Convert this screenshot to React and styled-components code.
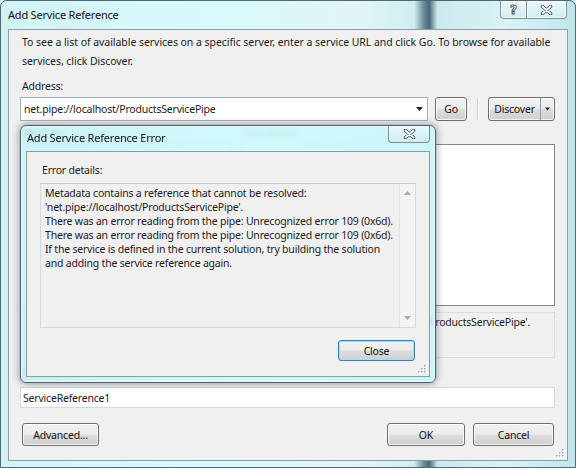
import React from 'react';
import styled, { createGlobalStyle, css } from 'styled-components';

const font = `"Noto Sans", "Open Sans", sans-serif`;

const GlobalStyle = createGlobalStyle`
  html, body {
    margin: 0;
    width: 576px;
    height: 468px;
    overflow: hidden;
    background: #cdeef2;
  }
  body {
    font-family: ${font};
    font-size: 10.5px;
    letter-spacing: -0.2px;
    color: #1b1b1b;
  }
  * { box-sizing: border-box; }
`;

const Window = styled.div`
  width: 576px;
  height: 468px;
  display: flex;
  flex-direction: column;
  padding: 0 7px 6px 7px;
  border: 1px solid #56656e;
  border-radius: 7px 7px 0 0;
  background:
    linear-gradient(90deg, #d2f3f6 0%, #d7fbfd 35%, #e2f5f6 62%, #cfeef1 72%, #6e8d98 73.6%, #47687a 74.6%, #cbe9ed 76%, #d9f3f6 88%, #bfe6ec 100%);
`;

const TitleBar = styled.div`
  height: 28px;
  display: flex;
  align-items: flex-start;
`;

const TitleText = styled.div`
  line-height: 28px;
  font-size: 11px;
  color: #111;
`;

const CaptionGroup = styled.div`
  margin-left: auto;
  margin-right: 1px;
  display: flex;
`;

const CaptionButton = styled.div`
  width: ${p => p.$w}px;
  height: 18px;
  display: flex;
  align-items: center;
  justify-content: center;
  border: 1px solid #7f9099;
  border-top: none;
  background: linear-gradient(#e9f7f8, #d4eef1);
  box-shadow: inset 0 0 0 1px rgba(255, 255, 255, 0.6);
  ${p => p.$first && css`border-radius: 0 0 0 4px; border-right: none;`}
  ${p => p.$last && css`border-radius: 0 0 4px 0;`}
`;

const HelpGlyph = styled.span`
  font-family: "DejaVu Sans", sans-serif;
  font-weight: bold;
  font-size: 12px;
  color: #fff;
  -webkit-text-stroke: 0.9px #4a565c;
  line-height: 1;
`;

const Client = styled.div`
  flex: 1;
  position: relative;
  display: flex;
  flex-direction: column;
  background: #f0f0f0;
  border: 1px solid #8d9ca6;
  padding: 3px 12px 14px 11px;
`;

const Intro = styled.p`
  margin: 0 0 0 2px;
  line-height: 19px;
  letter-spacing: -0.05px;
`;

const Label = styled.div`
  margin: ${p => p.$mt || 0}px 0 0 2px;
  line-height: ${p => p.$lh || 15}px;
`;

const Row = styled.div`
  display: flex;
  height: 24px;
  margin-top: 2px;
`;

const Combo = styled.div`
  width: 408px;
  display: flex;
  align-items: center;
  padding: 0 4px 0 3px;
  background: #fff;
  border: 1px solid #a9b1b8;
  span { flex: 1; }
`;

const Button = styled.div`
  width: ${p => p.$w}px;
  margin-left: ${p => p.$ml || 0}px;
  display: flex;
  align-items: center;
  justify-content: center;
  border: 1px solid ${p => (p.$focus ? '#3c7fb1' : '#707070')};
  border-radius: 3px;
  background: linear-gradient(#f2f2f2 0%, #ebebeb 48%, #dddddd 52%, #cfcfcf 100%);
  box-shadow: inset 0 0 0 1px ${p => (p.$focus ? '#a6dcf4' : 'rgba(255,255,255,0.75)')};
  color: #111;
`;

const Separator = styled.div`
  width: 2px;
  margin: 1px 9px 1px 10px;
  border-left: 1px solid #c8ccd0;
  border-right: 1px solid #fff;
`;

const SplitMain = styled.div`
  flex: 1;
  display: flex;
  align-items: center;
  justify-content: center;
  border-right: 1px solid #9a9a9a;
  height: 100%;
`;

const SplitArrow = styled.div`
  width: 13px;
  height: 100%;
  display: flex;
  align-items: center;
  justify-content: center;
`;

const Panels = styled.div`
  display: grid;
  grid-template-columns: 212px 1fr;
  column-gap: 8px;
  margin-top: 4px;
`;

const ListBox = styled.div`
  height: 162px;
  margin-top: 4px;
  background: #fff;
  border: 1px solid #828790;
`;

const Status = styled.div`
  height: 46px;
  margin-top: 6px;
  padding: 2px 4px 2px 15px;
  line-height: 15px;
  border: 1px solid #d8dfe4;
  white-space: nowrap;
  overflow: hidden;
  a { color: #0066cc; text-decoration: underline; }
`;

const TextInput = styled.div`
  height: 21px;
  margin-top: 6px;
  padding-left: 2px;
  display: flex;
  align-items: center;
  background: #fff;
  border: 1px solid #d3dae0;
`;

const Footer = styled.div`
  margin-top: auto;
  height: 23px;
  display: flex;
  padding-left: 2px;
  padding-right: 1px;
`;

const Grip = styled.svg`
  position: absolute;
  right: 2px;
  bottom: 2px;
`;

const ErrorDialog = styled.div`
  position: absolute;
  left: 11px;
  top: 95px;
  width: 416px;
  height: 258px;
  display: flex;
  flex-direction: column;
  padding: 0 5px 5px 5px;
  border: 1px solid #4f6069;
  border-radius: 6px;
  background: linear-gradient(90deg, rgba(198, 243, 247, 0.88) 0%, rgba(205, 250, 253, 0.9) 50%, rgba(200, 245, 249, 0.9) 100%);
  backdrop-filter: blur(2px);
  box-shadow: 0 0 7px 1px rgba(40, 60, 70, 0.45), inset 0 0 0 1px rgba(255, 255, 255, 0.5);
`;

const ErrorTitle = styled.div`
  height: 25px;
  display: flex;
  align-items: flex-start;
`;

const ErrorTitleText = styled.div`
  line-height: 24px;
  padding-left: 1px;
  font-size: 11px;
  color: #111;
`;

const ErrorClose = styled.div`
  margin-left: auto;
  width: 42px;
  height: 17px;
  display: flex;
  align-items: center;
  justify-content: center;
  border: 1px solid #7f9099;
  border-top: none;
  border-radius: 0 0 4px 4px;
  background: linear-gradient(#e6f8fa, #d0eef2);
`;

const ErrorBody = styled.div`
  position: relative;
  flex: 1;
  display: flex;
  flex-direction: column;
  background: #f0f0f0;
  border: 1px solid #8b9aa3;
  padding: 11px 13px 14px 13px;
`;

const Details = styled.div`
  height: 145px;
  margin-top: 5px;
  display: flex;
  border: 1px solid #d3dadf;
  border-top-color: #c0c8ce;
`;

const DetailsText = styled.div`
  flex: 1;
  padding: 2px 4px;
  line-height: 14px;
  white-space: nowrap;
  overflow: hidden;
`;

const ScrollBar = styled.div`
  width: 16px;
  display: flex;
  flex-direction: column;
  justify-content: space-between;
  align-items: center;
  padding: 7px 0;
  background: #f3f3f3;
  border-left: 1px solid #e2e2e2;
`;

const ErrorFooter = styled.div`
  display: flex;
  justify-content: flex-end;
  height: 21px;
  margin-top: 12px;
  padding-right: 1px;
`;

const ArrowDown = ({ color = '#222', w = 7 }) => (
  <svg width={w} height={4} viewBox="0 0 7 4">
    <path d="M0 0 L7 0 L3.5 4 Z" fill={color} />
  </svg>
);

const ArrowUp = ({ color = '#a8a8a8' }) => (
  <svg width={7} height={4} viewBox="0 0 7 4">
    <path d="M0 4 L7 4 L3.5 0 Z" fill={color} />
  </svg>
);

const CloseGlyph = () => (
  <svg width="13" height="10" viewBox="0 0 13 10">
    <path d="M2.5 1.5 L10.5 8.5 M10.5 1.5 L2.5 8.5" stroke="#4a565c" strokeWidth="3.6" strokeLinecap="round" />
    <path d="M2.5 1.5 L10.5 8.5 M10.5 1.5 L2.5 8.5" stroke="#fff" strokeWidth="1.8" strokeLinecap="round" />
  </svg>
);

const GripDots = () => (
  <Grip width="10" height="10" viewBox="0 0 10 10">
    {[[8, 2], [5, 5], [8, 5], [2, 8], [5, 8], [8, 8]].map(([x, y]) => (
      <g key={`${x}-${y}`}>
        <rect x={x} y={y} width="1.5" height="1.5" fill="#fff" />
        <rect x={x - 1} y={y - 1} width="1.5" height="1.5" fill="#a0a8ad" />
      </g>
    ))}
  </Grip>
);

const errorLines = [
  'Metadata contains a reference that cannot be resolved:',
  "'net.pipe://localhost/ProductsServicePipe'.",
  'There was an error reading from the pipe: Unrecognized error 109 (0x6d).',
  'There was an error reading from the pipe: Unrecognized error 109 (0x6d).',
  'If the service is defined in the current solution, try building the solution',
  'and adding the service reference again.'
];

export default function App () {
  return (
    <>
      <GlobalStyle />
      <Window>
        <TitleBar>
          <TitleText>Add Service Reference</TitleText>
          <CaptionGroup>
            <CaptionButton $w={26} $first><HelpGlyph>?</HelpGlyph></CaptionButton>
            <CaptionButton $w={41} $last><CloseGlyph /></CaptionButton>
          </CaptionGroup>
        </TitleBar>

        <Client>
          <Intro>
            To see a list of available services on a specific server, enter a service URL and click Go. To browse for available services, click Discover.
          </Intro>
          <Label $mt={7} $lh={17}>Address:</Label>
          <Row>
            <Combo>
              <span>net.pipe://localhost/ProductsServicePipe</span>
              <ArrowDown />
            </Combo>
            <Button $w={32} $ml={7}>Go</Button>
            <Separator />
            <Button $w={67}>
              <SplitMain>Discover</SplitMain>
              <SplitArrow><ArrowDown w={5} /></SplitArrow>
            </Button>
          </Row>

          <Panels>
            <div>
              <Label>Services:</Label>
              <ListBox />
            </div>
            <div>
              <Label>Operations:</Label>
              <ListBox />
            </div>
          </Panels>

          <Status>
            An error (<a>Details</a>) occurred while attempting to find services at 'net.pipe://localhost/ProductsServicePipe'.
          </Status>

          <Label $mt={8}>Namespace:</Label>
          <TextInput>ServiceReference1</TextInput>

          <Footer>
            <Button $w={77}>Advanced...</Button>
            <Button $w={78} $ml={288}>OK</Button>
            <Button $w={81} $ml={8}>Cancel</Button>
          </Footer>

          <GripDots />

          <ErrorDialog>
            <ErrorTitle>
              <ErrorTitleText>Add Service Reference Error</ErrorTitleText>
              <ErrorClose><CloseGlyph /></ErrorClose>
            </ErrorTitle>
            <ErrorBody>
              <Label>Error details:</Label>
              <Details>
                <DetailsText>
                  {errorLines.map((line, i) => <div key={i}>{line}</div>)}
                </DetailsText>
                <ScrollBar>
                  <ArrowUp />
                  <ArrowDown color="#a8a8a8" />
                </ScrollBar>
              </Details>
              <ErrorFooter>
                <Button $w={77} $focus>Close</Button>
              </ErrorFooter>
              <GripDots />
            </ErrorBody>
          </ErrorDialog>
        </Client>
      </Window>
    </>
  );
}
